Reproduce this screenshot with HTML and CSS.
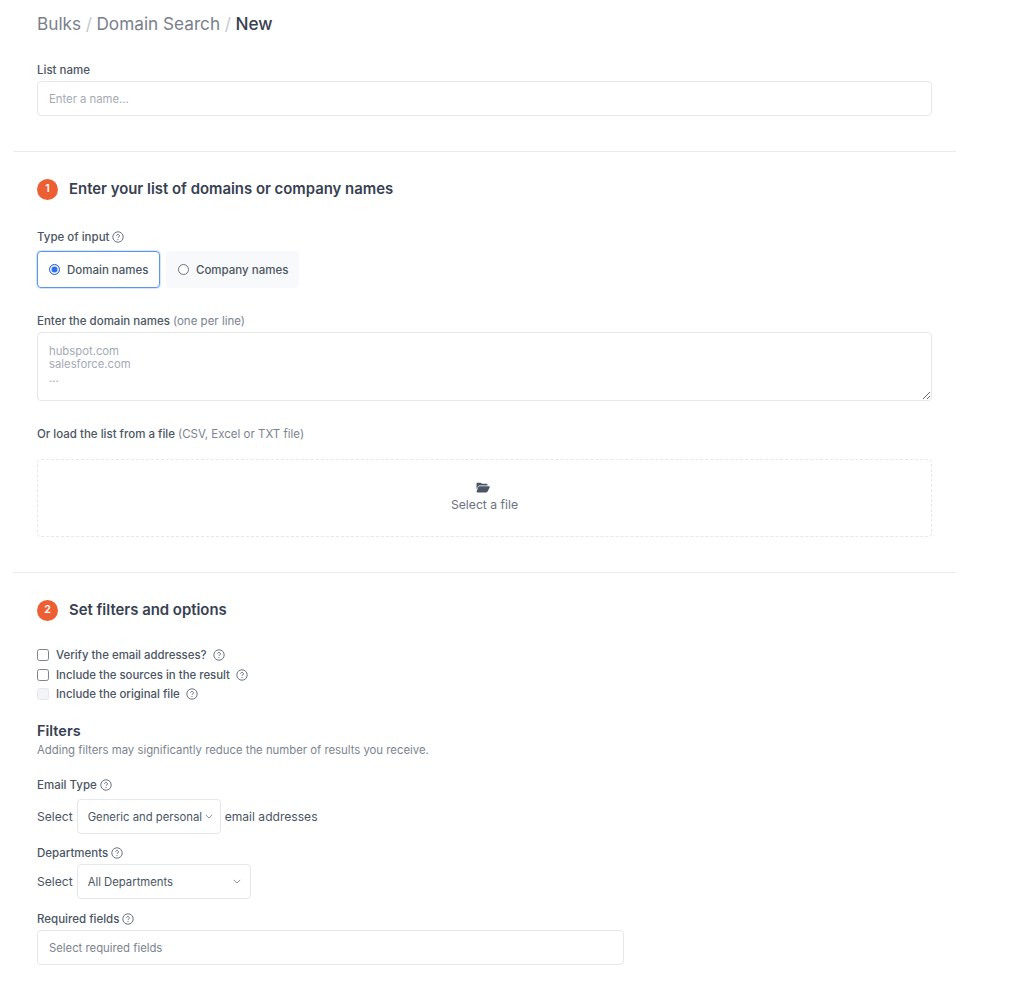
FILE: index.html
```html
<!DOCTYPE html>
<html lang="en">
<head>
    <meta charset="UTF-8">
    <meta name="viewport" content="width=device-width, initial-scale=1.0">
    <title>Bulks - Domain Search - New</title>
    <link rel="stylesheet" href="styles.css">
</head>
<body>
    <svg class="icon-defs" width="0" height="0">
        <symbol id="help" viewBox="0 0 12 12">
            <circle cx="6" cy="6" r="5.2" fill="none" stroke="currentColor" stroke-width="0.9"/>
            <path d="M4.6 4.800a1.400 1.400 0 1 1 2.200 1.150c-.5.33-.8.55-.8 1.050" fill="none" stroke="currentColor" stroke-width="0.9"/>
            <circle cx="6" cy="8.600" r="0.55" fill="currentColor"/>
        </symbol>
        <symbol id="chevron" viewBox="0 0 10 6">
            <path d="M1 1l4 4 4-4" fill="none" stroke="currentColor" stroke-width="1"/>
        </symbol>
    </svg>

    <div class="container">
        <div class="block block-top">
            <h1 class="breadcrumb">
                <span class="crumb">Bulks</span> <span class="sep">/</span>
                <span class="crumb">Domain Search</span> <span class="sep">/</span>
                New
            </h1>

            <label class="label label-name">List name</label>
            <input class="input" type="text" placeholder="Enter a name...">
        </div>

        <div class="block block-list">
            <h2 class="step"><span class="step-num">1</span>Enter your list of domains or company names</h2>

            <div class="label label-type">Type of input <svg class="help"><use href="#help"/></svg></div>
            <div class="choices">
                <div class="choice active"><span class="radio checked"></span>Domain names</div>
                <div class="choice"><span class="radio"></span>Company names</div>
            </div>

            <label class="label label-domains">Enter the domain names <span class="muted">(one per line)</span></label>
            <textarea class="input area" placeholder="hubspot.com&#10;salesforce.com&#10;..."></textarea>

            <label class="label label-file">Or load the list from a file <span class="muted">(CSV, Excel or TXT file)</span></label>
            <div class="dropzone">
                <svg class="folder" viewBox="0 0 14 11">
                    <path d="M.5 2c0-.8.5-1.300 1.200-1.300h2.600c.5 0 .8.2 1.100.5l.6.6h4.300c.8 0 1.200.5 1.200 1.200v.6H3.300c-.6 0-1 .3-1.300.8L.5 7.300z" fill="#4b5563"/>
                    <path d="M3.400 4.300h9.500c.6 0 1 .6.7 1.100l-2 4.200c-.3.5-.7.8-1.300.8H1.400c-.6 0-1-.6-.7-1.100L2.200 5c.3-.5.7-.7 1.200-.7z" fill="#4b5563"/>
                </svg>
                <span>Select a file</span>
            </div>
        </div>

        <div class="block block-options">
            <h2 class="step"><span class="step-num">2</span>Set filters and options</h2>

            <div class="checks">
                <div class="check"><span class="box"></span>Verify the email addresses? <svg class="help"><use href="#help"/></svg></div>
                <div class="check"><span class="box"></span>Include the sources in the result <svg class="help"><use href="#help"/></svg></div>
                <div class="check"><span class="box disabled"></span>Include the original file <svg class="help"><use href="#help"/></svg></div>
            </div>

            <h3 class="filters-title">Filters</h3>
            <p class="filters-note">Adding filters may significantly reduce the number of results you receive.</p>

            <div class="label label-email">Email Type <svg class="help"><use href="#help"/></svg></div>
            <div class="inline">
                Select
                <div class="select select-email">Generic and personal<svg class="chevron"><use href="#chevron"/></svg></div>
                email addresses
            </div>

            <div class="label label-dept">Departments <svg class="help"><use href="#help"/></svg></div>
            <div class="inline">
                Select
                <div class="select select-dept">All Departments<svg class="chevron"><use href="#chevron"/></svg></div>
            </div>

            <div class="label label-req">Required fields <svg class="help"><use href="#help"/></svg></div>
            <div class="multi">Select required fields</div>
        </div>
    </div>
</body>
</html>
```

FILE: styles.css
```css
* {
    margin: 0;
    padding: 0;
    box-sizing: border-box;
}

body {
    font-family: 'Inter', 'Liberation Sans', sans-serif;
    background: #fff;
    color: #374151;
    font-size: 12px;
    line-height: 18px;
}

.icon-defs {
    display: block;
    height: 0;
}

.container {
    width: 943px;
    margin-left: 13px;
}

.block {
    padding: 0 24px;
    border-bottom: 1px solid #e9ebf0;
}

.block:last-child {
    border-bottom: 0;
}

.block-top {
    padding-top: 13px;
    padding-bottom: 35px;
}

.block-list {
    padding-top: 26px;
    padding-bottom: 35px;
}

.block-options {
    padding-top: 26px;
}

.breadcrumb {
    font-size: 17.2px;
    line-height: 22px;
    font-weight: 500;
    color: #374151;
}

.crumb {
    font-weight: 400;
    color: #7a808b;
}

.sep {
    font-weight: 400;
    color: #c4c9d1;
}

.label {
    display: flex;
    align-items: center;
    gap: 3px;
    font-size: 11.5px;
    font-weight: 500;
    color: #4b5563;
    height: 18px;
}

.label .muted {
    font-weight: 400;
    color: #7b8390;
}

.label-name {
    margin-top: 26px;
    margin-bottom: 2px;
}

.input {
    display: block;
    width: 100%;
    height: 35px;
    border: 1px solid #e5e7eb;
    border-radius: 4px;
    padding: 0 11px;
    font-family: inherit;
    font-size: 11.3px;
    color: #374151;
    outline: none;
}

.input::placeholder {
    color: #a4aab4;
    opacity: 1;
}

.area {
    height: 69px;
    padding: 11.5px 11px;
    line-height: 13.5px;
    resize: vertical;
}

.step {
    display: flex;
    align-items: center;
    gap: 11px;
    height: 22px;
    font-size: 14.9px;
    font-weight: 600;
    color: #374151;
}

.step-num {
    width: 21px;
    height: 21px;
    border-radius: 50%;
    background: #ec5f33;
    color: #fff;
    font-size: 10.5px;
    font-weight: 600;
    display: flex;
    align-items: center;
    justify-content: center;
}

.help {
    width: 12px;
    height: 12px;
    color: #5b6472;
    flex: none;
}

.label-type {
    margin-top: 28px;
}

.choices {
    display: flex;
    gap: 6px;
    margin-top: 5px;
}

.choice {
    display: flex;
    align-items: center;
    height: 37px;
    padding: 0 11px 0 11.5px;
    gap: 7px;
    border-radius: 4px;
    background: #f8f9fa;
    font-size: 11.5px;
    font-weight: 500;
    color: #4b5563;
}

.choice.active {
    background: #fff;
    border: 1px solid #5b97f0;
    box-shadow: 0 0 0 1px rgba(91, 151, 240, 0.25);
    padding: 0 11px;
}

.radio {
    width: 11px;
    height: 11px;
    border-radius: 50%;
    border: 1px solid #6b7280;
    background: #fff;
}

.radio.checked {
    border-color: #2f6fed;
    box-shadow: inset 0 0 0 1.5px #fff;
    background: #2f6fed;
}

.label-domains {
    margin-top: 24px;
    margin-bottom: 2px;
}

.label-file {
    margin-top: 24px;
}

.dropzone {
    margin-top: 16px;
    height: 78px;
    border: 1px dashed #e5e7eb;
    border-radius: 4px;
    display: flex;
    flex-direction: column;
    align-items: center;
    justify-content: center;
    gap: 3px;
    font-size: 12.2px;
    color: #6b7280;
}

.folder {
    width: 14px;
    height: 11px;
    margin-right: 3px;
}

.checks {
    margin-top: 25px;
    display: flex;
    flex-direction: column;
    gap: 1.5px;
}

.check {
    display: flex;
    align-items: center;
    height: 18px;
    gap: 4px;
    font-size: 11.4px;
    font-weight: 500;
    color: #4b5563;
}

.check .help {
    margin-left: 2px;
}

.box {
    width: 12px;
    height: 12px;
    border: 1px solid #7b8390;
    border-radius: 2.5px;
    background: #fff;
    margin-right: 3px;
}

.box.disabled {
    border-color: #e5e7eb;
    background: #f3f4f6;
}

.filters-title {
    margin-top: 19px;
    font-size: 14.5px;
    line-height: 18px;
    font-weight: 600;
    color: #374151;
}

.filters-note {
    margin-top: 1px;
    font-size: 11.33px;
    color: #7b8390;
}

.label-email {
    margin-top: 17px;
}

.inline {
    display: flex;
    align-items: center;
    gap: 4px;
    margin-top: 5px;
    font-size: 12.1px;
    color: #4b5563;
}

.select {
    display: flex;
    align-items: center;
    justify-content: space-between;
    height: 35px;
    border: 1px solid #e5e7eb;
    border-radius: 4px;
    padding: 0 7px 0 10px;
    background: #fff;
    font-size: 11.3px;
    color: #4b5563;
}

.select-email {
    width: 144px;
}

.select-dept {
    width: 174px;
    padding-right: 9px;
}

.chevron {
    width: 8px;
    height: 5px;
    color: #6b7280;
}

.label-dept {
    margin-top: 10px;
}

.label-dept + .inline {
    margin-top: 2px;
}

.label-req {
    margin-top: 11px;
}

.multi {
    margin-top: 2px;
    width: 587px;
    height: 35px;
    border: 1px solid #e5e7eb;
    border-radius: 4px;
    padding: 0 11px;
    display: flex;
    align-items: center;
    font-size: 11.3px;
    color: #7b8390;
}
```
